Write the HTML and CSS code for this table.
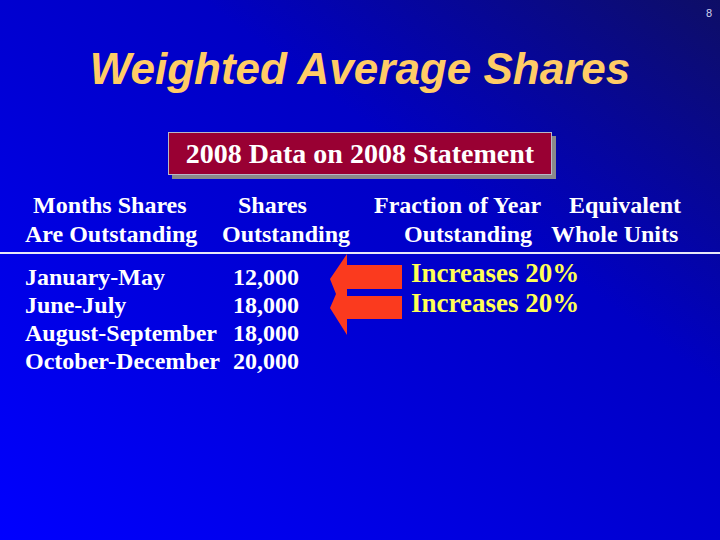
FILE: index.html
```html
<!DOCTYPE html>
<html lang="en">
<head>
    <meta charset="UTF-8">
    <meta name="viewport" content="width=device-width, initial-scale=1.0">
    <title>Weighted Average Shares</title>
    <link rel="stylesheet" href="styles.css">
</head>
<body>
    <div class="slide">
        <div class="page-num">8</div>
        <h1 class="title">Weighted Average Shares</h1>

        <div class="banner-wrap">
            <div class="banner">2008 Data on 2008 Statement</div>
        </div>

        <div class="col-heads">
            <span class="pad-8">Months Shares</span>
            <span class="pad-16">Shares</span>
            <span>Fraction of Year</span>
            <span class="pad-18">Equivalent</span>
            <span>Are Outstanding</span>
            <span>Outstanding</span>
            <span class="pad-30">Outstanding</span>
            <span>Whole Units</span>
        </div>
        <div class="rule"></div>

        <div class="data">
            <div class="periods">
                <span>January-May</span><span>12,000</span>
                <span>June-July</span><span>18,000</span>
                <span>August-September</span><span>18,000</span>
                <span>October-December</span><span>20,000</span>
            </div>
            <svg class="arrows" width="72" height="81" viewBox="0 0 72 81">
                <polygon points="17,0 17,11 72,11 72,35 17,35 17,42 72,42 72,65 17,65 17,81 0,54 6,40 0,25" fill="#fb3a1e"/>
            </svg>
            <div class="changes">
                <div>Increases 20%</div>
                <div>Increases 20%</div>
            </div>
        </div>
    </div>
</body>
</html>
```

FILE: styles.css
```css
body {
    margin: 0;
    width: 720px;
    height: 540px;
    overflow: hidden;
    background: linear-gradient(to bottom left, #0e0e66 0%, #0000c4 36%, #0000d4 55%, #0000ff 100%);
    font-family: "Liberation Serif", "Times New Roman", serif;
    color: #fff;
}

.slide {
    height: 540px;
}

.page-num {
    padding: 6px 8px 0 0;
    text-align: right;
    font-family: "Liberation Sans", Arial, sans-serif;
    font-size: 11px;
    line-height: 14px;
    color: #d4d4ee;
}

.title {
    margin: 24px 0 0;
    text-align: center;
    font-family: "Liberation Sans", Arial, sans-serif;
    font-size: 44px;
    font-style: italic;
    font-weight: bold;
    line-height: 50px;
    color: #ffcc66;
}

.banner-wrap {
    display: flex;
    justify-content: center;
    margin-top: 38px;
}

.banner {
    width: 382px;
    border: 1px solid #b8b8c8;
    background-color: #990033;
    box-shadow: 4px 4px 0 #8a8a8a;
    text-align: center;
    font-size: 28px;
    font-weight: bold;
    line-height: 41px;
}

.col-heads {
    display: grid;
    grid-template-columns: 197px 152px 177px auto;
    margin-top: 16px;
    padding-left: 25px;
    font-size: 24px;
    font-weight: bold;
    line-height: 29px;
    white-space: nowrap;
}

.pad-8 { padding-left: 8px; }
.pad-16 { padding-left: 16px; }
.pad-18 { padding-left: 18px; }
.pad-30 { padding-left: 30px; }

.rule {
    margin-top: 3px;
    height: 2px;
    background-color: #e8e8f8;
}

.data {
    display: flex;
    align-items: flex-start;
    padding-left: 25px;
}

.periods {
    display: grid;
    grid-template-columns: 208px 66px;
    margin-top: 9px;
    font-size: 24px;
    font-weight: bold;
    line-height: 28px;
    white-space: nowrap;
}

.arrows {
    display: block;
    margin-left: 31px;
}

.changes {
    margin: 4px 0 0 9px;
    font-size: 27px;
    font-weight: bold;
    line-height: 30px;
    color: #ffff55;
    white-space: nowrap;
}
```
